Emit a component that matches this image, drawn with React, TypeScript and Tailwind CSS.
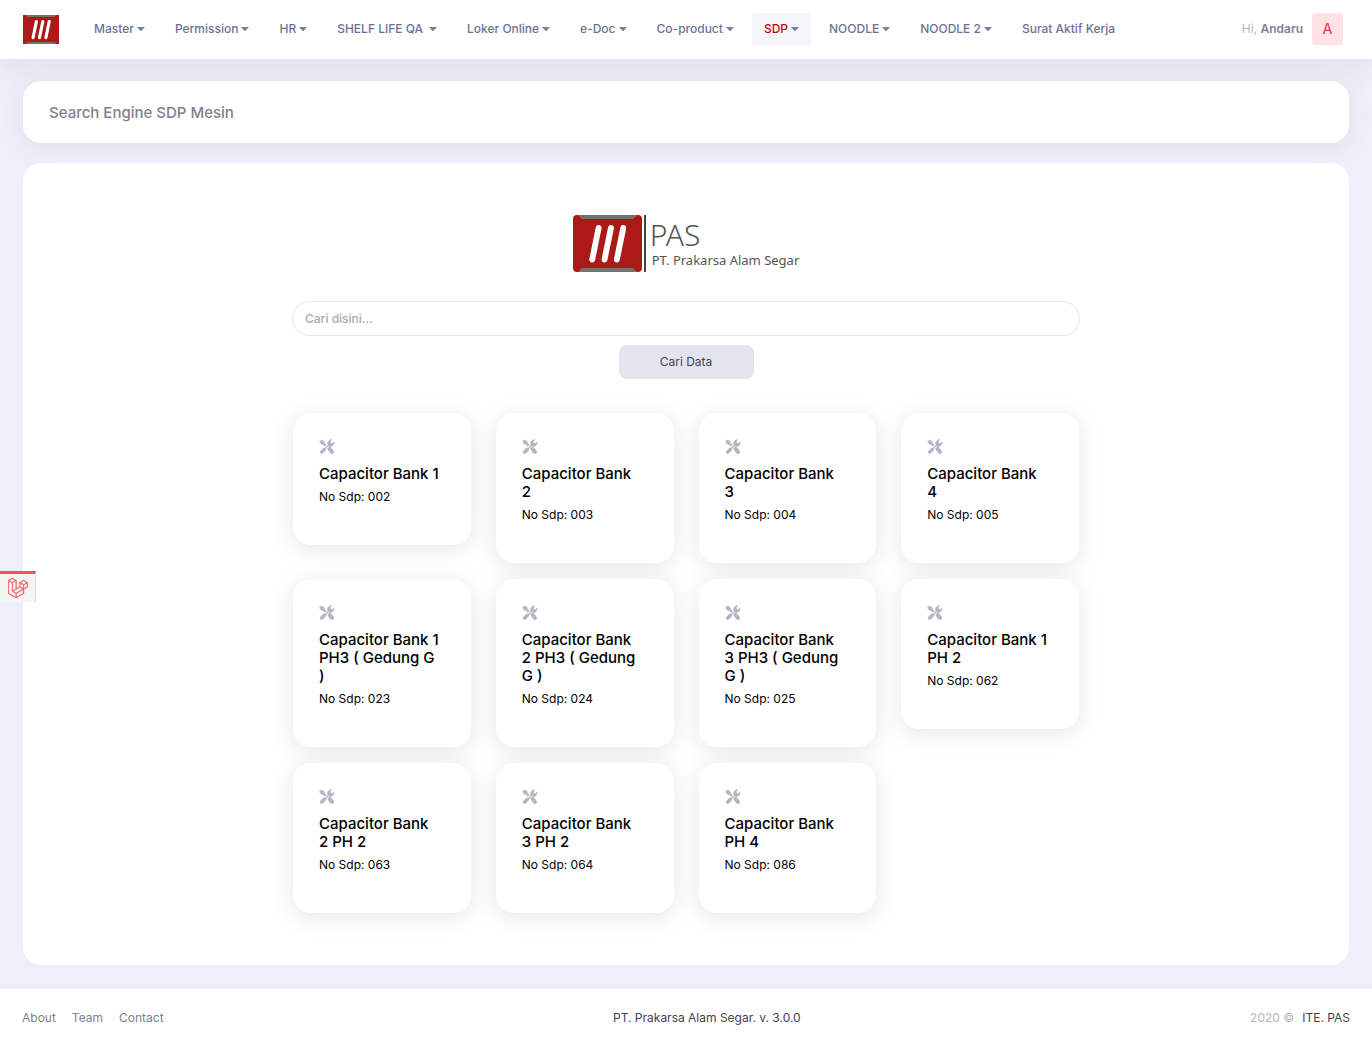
import React from "react";
import { FaLaravel } from "react-icons/fa";

const navItems = [
  { label: "Master" },
  { label: "Permission" },
  { label: "HR" },
  { label: "SHELF LIFE QA", wide: true },
  { label: "Loker Online" },
  { label: "e-Doc" },
  { label: "Co-product" },
  { label: "SDP", active: true },
  { label: "NOODLE" },
  { label: "NOODLE 2" },
];

const machines = [
  { lines: ["Capacitor Bank 1"], no: "002" },
  { lines: ["Capacitor Bank", "2"], no: "003" },
  { lines: ["Capacitor Bank", "3"], no: "004" },
  { lines: ["Capacitor Bank", "4"], no: "005" },
  { lines: ["Capacitor Bank 1", "PH3 ( Gedung G", ")"], no: "023" },
  { lines: ["Capacitor Bank", "2 PH3 ( Gedung", "G )"], no: "024" },
  { lines: ["Capacitor Bank", "3 PH3 ( Gedung", "G )"], no: "025" },
  { lines: ["Capacitor Bank 1", "PH 2"], no: "062" },
  { lines: ["Capacitor Bank", "2 PH 2"], no: "063" },
  { lines: ["Capacitor Bank", "3 PH 2"], no: "064" },
  { lines: ["Capacitor Bank", "PH 4"], no: "086" },
];

function Emblem({ className, square }: { className: string; square?: boolean }) {
  return (
    <svg viewBox="0 0 70 57" preserveAspectRatio="none" className={className} aria-hidden="true">
      <rect width="70" height="57" rx={square ? 0 : 4} fill="#ab1a16" />
      <path d="M5 0H65L61 4H9Z M5 57H65L61 53H9Z" fill="#77706f" />
      <path d="M26 13L19.500 44.500M38.500 13L32 44.500M51 13L44.500 44.500" stroke="#fff" strokeWidth="6" strokeLinecap="round" />
    </svg>
  );
}

function Caret() {
  return (
    <svg viewBox="0 0 8 4" className="h-1 w-2 shrink-0" aria-hidden="true">
      <path d="M0 0H8L4.600 3.700Q4 4.200 3.400 3.700Z" fill="#7d7f95" />
    </svg>
  );
}

function ToolsIcon() {
  return (
    <svg viewBox="0 0 16 16" className="block size-4" aria-hidden="true">
      <g fill="#b5b5c3" stroke="#b5b5c3" strokeLinejoin="round" strokeLinecap="round">
        <path d="M1 2.400L2.300 1L4.800 2.300L5.300 3.900L7.300 5.900L6 7.200L3.900 5.300L2.300 4.900Z" strokeWidth=".8" />
        <path d="M10.400 9.800L13 12.900" strokeWidth="4" />
        <path d="M5.500 10.300L2.700 13.100" strokeWidth="3.600" />
        <path d="M5.500 10.500L10 6" strokeWidth="1.600" />
        <path d="M11.700.7L12.900.6L11.400 2.500L11.700 4.100L13.300 4.400L15.100 2.800A3.700 3.700 0 0 1 9.200 6.700A3.700 3.700 0 0 1 11.700.7Z" strokeWidth=".3" />
      </g>
      <path d="M6.800 10.300L10 7.200" stroke="#fff" strokeWidth=".7" />
    </svg>
  );
}

export default function App() {
  return (
    <div className="flex min-h-screen flex-col bg-[#eeeffa] font-['Inter',sans-serif] text-xs text-[#3f4254]">
      <header className="flex h-[59px] items-center bg-white pl-[23px] pr-[29px] shadow-[0_10px_30px_0_rgba(82,63,105,0.08)]">
        <a href="#" aria-label="PAS" className="mr-[23px] shrink-0">
          <Emblem square className="block h-[29px] w-9" />
        </a>
        <nav className="flex items-center gap-[6px] pb-px font-medium text-[#6c7293]">
          {navItems.map((item) => (
            <button
              key={item.label}
              type="button"
              className={`flex h-[33px] items-center whitespace-nowrap rounded px-3 ${item.wide ? "gap-[6px]" : "gap-[3px]"} ${
                item.active ? "bg-[#f5f5fa] text-[#b50c0c]" : ""
              }`}
            >
              {item.label}
              <Caret />
            </button>
          ))}
          <a href="#" className="whitespace-nowrap px-3">
            Surat Aktif Kerja
          </a>
        </nav>
        <button type="button" className="ml-auto flex items-center gap-[9px] whitespace-nowrap pb-px">
          <span className="text-[#b5b5c3]">
            Hi, <span className="font-semibold text-[#80808f]">Andaru</span>
          </span>
          <span className="flex h-8 w-[31px] items-center justify-center rounded bg-[#ffe2e5] text-sm font-medium text-[#f0465a]">A</span>
        </button>
      </header>

      <main className="flex grow flex-col gap-5 px-[23px] pb-6 pt-[22px]">
        <section className="rounded-[18px] bg-white px-[26px] pb-[19px] pt-[21px] shadow-[0_4px_24px_0_rgba(100,100,90,0.10)]">
          <h1 className="text-[15px] font-medium leading-[22px] text-[#80808f]">Search Engine SDP Mesin</h1>
        </section>

        <section className="grow rounded-[18px] bg-white px-6 pt-[52px]">
          <div className="mx-auto flex w-full max-w-[788px] flex-col items-center">
            <div className="flex h-[57px] items-center">
              <Emblem className="block h-[57px] w-[69px]" />
              <div className="ml-[2px] h-full w-[2px] bg-[#444]" />
              <div className="ml-1 font-['Noto_Sans',sans-serif] text-[#555]">
                <p className="text-[30px] font-light leading-8">PAS</p>
                <p className="ml-[2px] text-[13px] leading-[18px]">PT. Prakarsa Alam Segar</p>
              </div>
            </div>

            <form className="mt-[29px] flex w-full flex-col items-center" onSubmit={(e) => e.preventDefault()}>
              <input
                type="text"
                aria-label="Cari disini"
                placeholder="Cari disini..."
                className="h-[35px] w-full rounded-full border border-[#e4e6e9] bg-white px-3 font-medium outline-none placeholder:text-[#a9a9b2]"
              />
              <button type="submit" className="mt-[9px] h-[34px] w-[135px] rounded-lg bg-[#e4e4ef]">
                Cari Data
              </button>
            </form>

            <div className="mt-[34px] grid w-full grid-cols-4 items-start gap-x-[25px] gap-y-4 px-px pb-[52px]">
              {machines.map((m) => (
                <a
                  key={m.no}
                  href="#"
                  className="block rounded-[18px] bg-white px-[26px] pb-[39px] pt-[26px] text-black shadow-[0_4px_24px_0_rgba(0,0,0,0.10)]"
                >
                  <ToolsIcon />
                  <h2 className="mt-[10px] text-[15px] font-medium leading-[18px]">
                    {m.lines.map((line) => (
                      <span key={line} className="block whitespace-nowrap">
                        {line}
                      </span>
                    ))}
                  </h2>
                  <p className="mt-[5px] leading-[18px]">No Sdp: {m.no}</p>
                </a>
              ))}
            </div>
          </div>
        </section>
      </main>

      <footer className="flex h-[58px] items-center justify-between bg-white px-[22px]">
        <nav className="flex gap-4 text-[#80808f]">
          <a href="#">About</a>
          <a href="#">Team</a>
          <a href="#">Contact</a>
        </nav>
        <p>PT. Prakarsa Alam Segar. v. 3.0.0</p>
        <p className="flex gap-2">
          <span className="text-[#b5b5c3]">2020 ©</span>
          <a href="#">ITE. PAS</a>
        </p>
      </footer>

      <button
        type="button"
        aria-label="Debug bar"
        className="fixed left-0 top-[571px] flex h-[31px] w-9 items-center justify-center border-r border-t-[3px] border-r-[#ddd] border-t-[#ee5562] bg-[#f5f5f5] text-[#f0574c]"
      >
        <FaLaravel size={20} stroke="currentColor" strokeWidth={10} />
      </button>
    </div>
  );
}
